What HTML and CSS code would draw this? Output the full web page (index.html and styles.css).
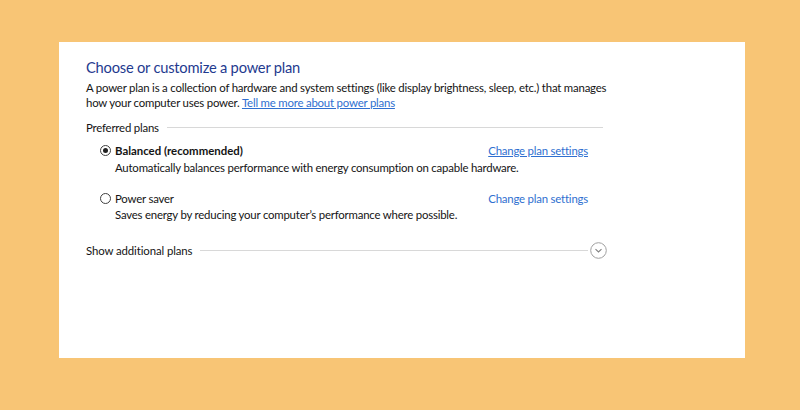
FILE: index.html
```html
<!DOCTYPE html>
<html>
<head>
<meta charset="utf-8">
<link rel="stylesheet" href="styles.css">
</head>
<body>
<div class="panel">
  <h1 class="title">Choose or customize a power plan</h1>
  <p class="intro">A power plan is a collection of hardware and system settings (like display brightness, sleep, etc.) that manages how your computer uses power. <a class="link underline" href="#">Tell me more about power plans</a></p>
  <div class="section-head">
    <span class="section-label">Preferred plans</span>
    <span class="rule"></span>
  </div>
  <div class="plans">
    <div class="plan">
      <div class="plan-row">
        <label class="plan-name bold"><span class="radio checked"></span>Balanced (recommended)</label>
        <a class="link underline" href="#">Change plan settings</a>
      </div>
      <div class="plan-desc">Automatically balances performance with energy consumption on capable hardware.</div>
    </div>
    <div class="plan">
      <div class="plan-row">
        <label class="plan-name"><span class="radio"></span>Power saver</label>
        <a class="link" href="#">Change plan settings</a>
      </div>
      <div class="plan-desc">Saves energy by reducing your computer’s performance where possible.</div>
    </div>
  </div>
  <div class="more">
    <span class="section-label">Show additional plans</span>
    <span class="rule"></span>
    <span class="expand"><svg width="17" height="17" viewBox="0 0 17 17"><circle cx="8.5" cy="8.5" r="7.8" fill="none" stroke="#a0a0a0" stroke-width="1"/><path d="M5.5 7.2 L8.5 10 L11.5 7.2" fill="none" stroke="#808080" stroke-width="1.1"/></svg></span>
  </div>
</div>
</body>
</html>
```
FILE: styles.css
```css
html, body {
  margin: 0;
  padding: 0;
}
body {
  background: #f8c575;
  font-family: "Lato", "Noto Sans", sans-serif;
  font-size: 11.4px;
  letter-spacing: -0.2px;
  color: #141414;
  width: 800px;
  height: 410px;
  overflow: hidden;
}
.panel {
  margin: 42px 0 0 59px;
  width: 686px;
  height: 316px;
  box-sizing: border-box;
  background: #ffffff;
  padding: 15px 0 0 27px;
}
.title {
  margin: 0;
  font-size: 14.7px;
  letter-spacing: -0.22px;
  font-weight: normal;
  color: #1f3b8f;
  line-height: 20px;
}
.intro {
  margin: 4px 0 0 0;
  width: 530px;
  line-height: 14.5px;
}
.link {
  color: #2f6fd0;
  text-decoration: none;
}
.link.underline {
  text-decoration: underline;
}
.section-head {
  display: flex;
  align-items: center;
  width: 517px;
  margin-top: 10px;
  height: 14px;
}
.section-label {
  white-space: nowrap;
  margin-right: 8px;
}
.more .section-label {
  letter-spacing: -0.1px;
}
.rule {
  flex: 1;
  height: 1px;
  background: #d8d8d8;
}
.plans {
  margin-left: 14px;
  width: 488px;
}
.plan {
  margin-top: 8px;
}
.plan + .plan {
  margin-top: 15px;
}
.plan-row {
  display: flex;
  justify-content: space-between;
  align-items: center;
  height: 16px;
}
.plan-name {
  display: flex;
  align-items: center;
}
.bold {
  font-weight: bold;
  letter-spacing: 0;
}
.radio {
  width: 11px;
  height: 11px;
  border: 1px solid #404040;
  border-radius: 50%;
  box-sizing: border-box;
  margin-right: 4px;
  position: relative;
  background: #fff;
}
.radio.checked::after {
  content: "";
  position: absolute;
  left: 2px;
  top: 2px;
  width: 5px;
  height: 5px;
  border-radius: 50%;
  background: #222;
}
.plan-desc {
  margin-left: 15px;
  margin-top: 3px;
  line-height: 14px;
}
.plan + .plan .plan-desc {
  margin-top: 2px;
}
.more {
  display: flex;
  align-items: center;
  width: 521px;
  margin-top: 19px;
  height: 18px;
}
.more .rule {
  margin-right: 2px;
}
.expand {
  display: flex;
}
```
